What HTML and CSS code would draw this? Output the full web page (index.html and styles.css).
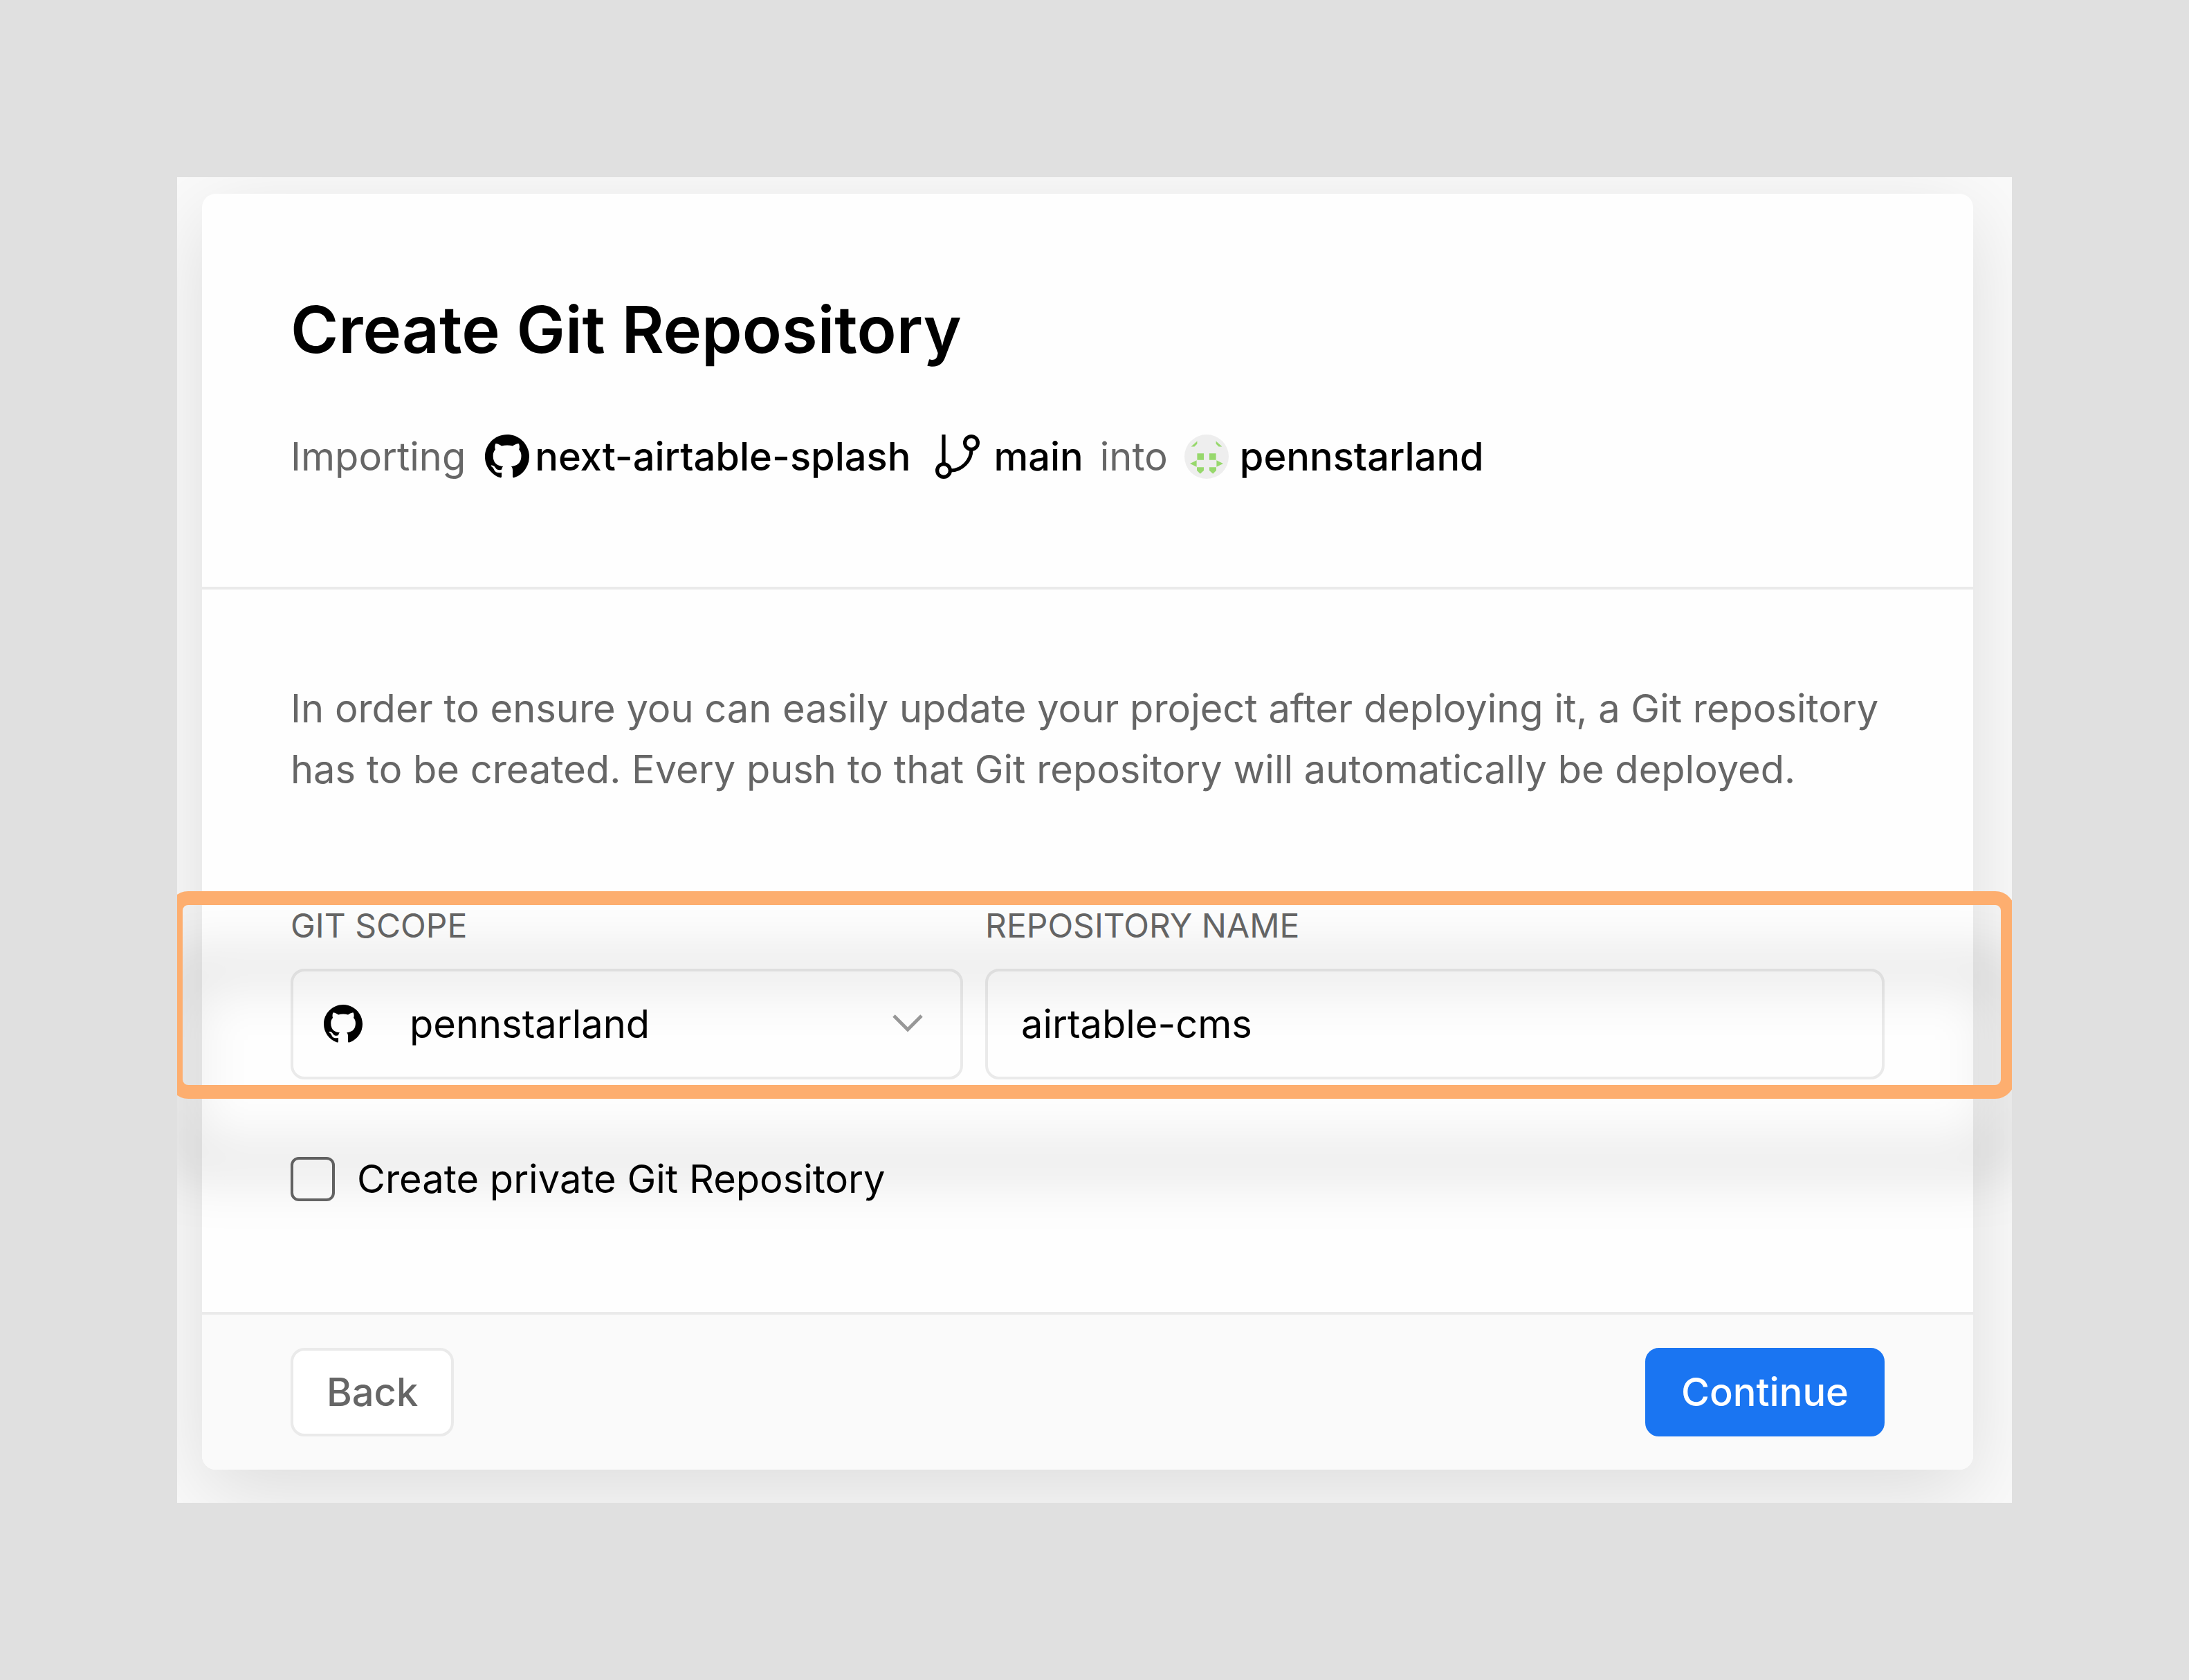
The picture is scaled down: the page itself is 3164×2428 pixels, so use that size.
FILE: index.html
```html
<!DOCTYPE html>
<html lang="en">
<head>
  <meta charset="utf-8">
  <meta name="viewport" content="width=device-width, initial-scale=1">
  <title>Create Git Repository</title>
  <link rel="stylesheet" href="styles.css">
</head>
<body>
  <svg class="sprite" aria-hidden="true">
    <symbol id="github" viewBox="0 0 16 16">
      <path fill-rule="evenodd" d="M8 0C3.58 0 0 3.58 0 8c0 3.54 2.29 6.53 5.47 7.59.4.07.55-.17.55-.38 0-.19-.01-.82-.01-1.49-2.01.37-2.53-.49-2.69-.94-.09-.23-.48-.94-.82-1.13-.28-.15-.68-.52-.01-.53.63-.01 1.08.58 1.23.82.72 1.21 1.87.87 2.33.66.07-.52.28-.87.51-1.07-1.78-.2-3.64-.89-3.64-3.95 0-.87.31-1.59.82-2.15-.08-.2-.36-1.02.08-2.12 0 0 .67-.21 2.2.82.64-.18 1.32-.27 2-.27s1.36.09 2 .27c1.53-1.04 2.2-.82 2.2-.82.44 1.1.16 1.92.08 2.12.51.56.82 1.27.82 2.15 0 3.07-1.87 3.75-3.65 3.95.29.25.54.73.54 1.48 0 1.07-.01 1.93-.01 2.2 0 .21.15.46.55.38A8.01 8.01 0 0 0 16 8c0-4.42-3.58-8-8-8z"/>
    </symbol>
  </svg>

  <main class="panel">
    <form class="card">
      <header class="card-header">
        <h1 class="title">Create Git Repository</h1>
        <p class="import">
          <span>Importing</span>
          <span class="source"><svg class="icon" aria-hidden="true"><use href="#github"/></svg><strong>next-airtable-splash</strong></span>
          <span class="branch">
            <svg class="icon" viewBox="0 0 16 16" fill="none" stroke="currentColor" stroke-width="1.300" aria-hidden="true">
              <path d="M3 0v10.500"/>
              <circle cx="3" cy="13" r="2.350"/>
              <circle cx="13" cy="3" r="2.350"/>
              <path d="M13 5.500C13 9.500 9.500 13 5.500 13"/>
            </svg>
            <strong>main</strong>
          </span>
          <span>into</span>
          <span class="target">
            <svg class="icon" viewBox="0 0 16 16" aria-hidden="true">
              <circle cx="8" cy="8" r="8" fill="#eeeeee"/>
              <g fill="#97d86c">
                <path d="M2.400 4.400 4.600 2.400V3.400L3.600 4.400zM13.600 4.400 11.400 2.400V3.400L12.400 4.400z"/>
                <path d="M4.600 6.800H7V9.200H4.600zM9 6.800h2.400V9.200H9z"/>
                <path d="M4.400 9.300v2.400L2 10.500zM11.600 9.300v2.400L14 10.500z"/>
                <path d="M4.500 11.800H7V13L5.700 14.200 4.500 13zM9 11.800h2.500V13L10.300 14.200 9 13z"/>
              </g>
            </svg>
            <strong>pennstarland</strong>
          </span>
        </p>
      </header>

      <section class="card-body">
        <p class="intro">In order to ensure you can easily update your project after deploying it, a Git repository has to be created. Every push to that Git repository will automatically be deployed.</p>

        <div class="fields">
          <div class="field">
            <label class="label" for="scope">GIT SCOPE</label>
            <div class="select">
              <select class="control" id="scope">
                <option>pennstarland</option>
              </select>
              <svg class="select-logo" aria-hidden="true"><use href="#github"/></svg>
              <svg class="select-arrow" viewBox="0 0 12 7" aria-hidden="true"><path d="M1 .5l5 5 5-5"/></svg>
            </div>
          </div>
          <div class="field">
            <label class="label" for="repo">REPOSITORY NAME</label>
            <input class="control" id="repo" type="text" value="airtable-cms">
          </div>
          <div class="highlight" aria-hidden="true"></div>
        </div>

        <label class="private"><input class="checkbox" type="checkbox">Create private Git Repository</label>
      </section>

      <footer class="card-footer">
        <button class="button" type="button">Back</button>
        <button class="button primary" type="submit">Continue</button>
      </footer>
    </form>
  </main>
</body>
</html>
```
FILE: styles.css
```css
* {
  box-sizing: border-box;
}

body {
  margin: 0;
  padding: 256px;
  background: #e0e0e0;
  color: #000;
  font: 400 56px/88px Inter, "Liberation Sans", sans-serif;
}

h1,
p {
  margin: 0;
}

strong {
  font-weight: 500;
}

.sprite {
  display: none;
}

.panel {
  position: relative;
  overflow: hidden;
  padding: 24px 56px 48px 36px;
  background: #fafafa;
}

.card {
  border-radius: 20px;
  background: #fefefe;
  box-shadow: 0 32px 120px rgba(0, 0, 0, 0.12);
}

.card-header {
  padding: 128px 128px 144px;
  border-bottom: 4px solid #eaeaea;
}

.title {
  font-size: 94px;
  line-height: 136px;
  font-weight: 600;
}

.import {
  display: flex;
  flex-wrap: wrap;
  align-items: center;
  gap: 24px;
  margin-top: 72px;
  color: #666;
}

.source,
.branch,
.target {
  display: flex;
  align-items: center;
  color: #000;
}

.source {
  gap: 8px;
  margin-left: 4px;
}

.branch {
  gap: 20px;
  margin-left: 12px;
}

.target {
  gap: 16px;
}

.icon {
  flex: none;
  width: 64px;
  height: 64px;
  fill: currentColor;
}

.branch .icon {
  fill: none;
}

.card-body {
  padding: 128px 128px 148px;
}

.intro {
  color: #666;
}

.fields {
  position: relative;
  display: grid;
  grid-template-columns: 243fr 325fr;
  gap: 32px;
  margin-top: 152px;
}

.label {
  display: block;
  margin-bottom: 32px;
  color: #666;
  font-size: 48px;
  line-height: 60px;
}

.control {
  display: block;
  width: 100%;
  height: 160px;
  padding: 0 48px;
  border: 4px solid #eaeaea;
  border-radius: 20px;
  background: transparent;
  color: #000;
  font: inherit;
  appearance: none;
}

.select {
  position: relative;
}

.select .control {
  padding-left: 168px;
}

.select-logo,
.select-arrow {
  position: absolute;
  pointer-events: none;
}

.select-logo {
  top: 52px;
  left: 48px;
  width: 56px;
  height: 56px;
}

.select-arrow {
  top: 66px;
  right: 56px;
  width: 48px;
  height: 28px;
  fill: none;
  stroke: #999;
  stroke-width: 1.2;
}

.highlight {
  position: absolute;
  inset: -20px -188px -28px -176px;
  border: 20px solid #fdae6f;
  border-radius: 28px;
  filter: drop-shadow(0 100px 40px rgba(0, 0, 0, 0.25));
  pointer-events: none;
}

.private {
  display: flex;
  align-items: center;
  gap: 32px;
  margin-top: 100px;
}

.checkbox {
  flex: none;
  width: 64px;
  height: 64px;
  margin: 0;
  border: 4px solid #666;
  border-radius: 12px;
  appearance: none;
}

.card-footer {
  display: flex;
  justify-content: space-between;
  padding: 48px 128px;
  border-top: 4px solid #eaeaea;
  border-radius: 0 0 20px 20px;
  background: #fafafa;
}

.button {
  height: 128px;
  padding: 0 48px;
  border: 4px solid #eaeaea;
  border-radius: 20px;
  background: #fff;
  color: #666;
  font: inherit;
  font-weight: 500;
}

.primary {
  border-color: #1a75f2;
  background: #1a75f2;
  color: #fff;
}
```
